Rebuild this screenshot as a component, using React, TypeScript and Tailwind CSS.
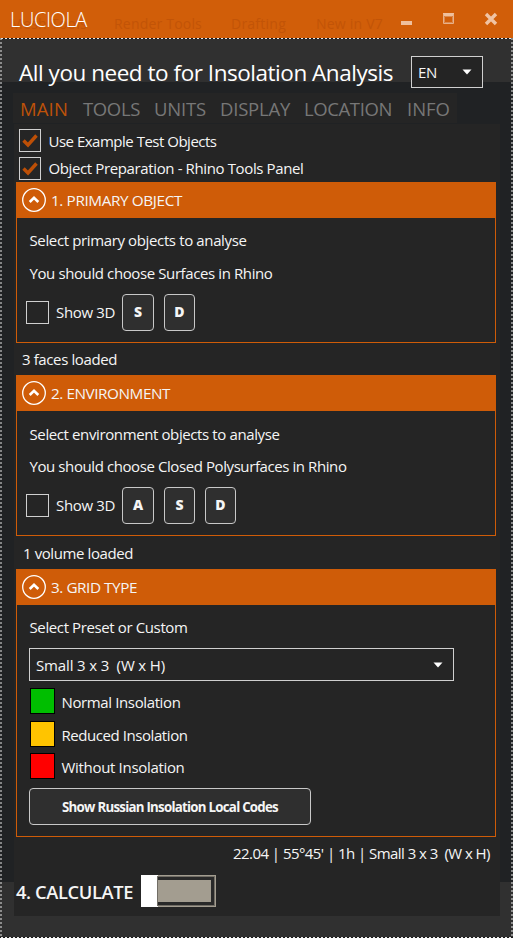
import { useLayoutEffect, useRef, useState, type ReactNode } from 'react';

// A single line of text, tracked so that it spans the given width.
function Line({ w, className = '', children }: { w: number; className?: string; children: string }) {
  const ref = useRef<HTMLSpanElement>(null);
  const [spacing, setSpacing] = useState(0);
  useLayoutEffect(() => {
    if (!ref.current) return;
    const natural = ref.current.getBoundingClientRect().width;
    setSpacing((w - natural) / children.length);
  }, [w, children]);
  return (
    <span ref={ref} className={`block w-max shrink-0 -translate-y-px whitespace-pre ${className}`} style={{ letterSpacing: spacing }}>
      {children}
    </span>
  );
}

function Check({ checked = false, className = '' }: { checked?: boolean; className?: string }) {
  return (
    <span className={`flex h-[23px] shrink-0 items-center justify-center border border-[#d0d0d0] ${className}`}>
      {checked && (
        <svg width="16" height="14" viewBox="0 0 16 14" fill="none" stroke="#bd4f06" strokeWidth="3.4">
          <path d="M1.5 6.5 L6 11 L14.5 1.5" />
        </svg>
      )}
    </span>
  );
}

function Key({ className, children }: { className: string; children: string }) {
  return (
    <button className={`flex h-[37px] shrink-0 items-center justify-center rounded-[4px] border border-[#c8c8c8] bg-[#2f2f2f] pb-[2px] text-[14px] font-extrabold ${className}`}>
      {children}
    </button>
  );
}

function Section({ title, w, className, children }: { title: string; w: number; className: string; children: ReactNode }) {
  return (
    <section className={`ml-[2px] w-[480px] shrink-0 border border-[#cf5c08] ${className}`}>
      <header className="flex h-[35px] items-center bg-[#cf5c08] pl-[5px]">
        <svg className="mb-px" width="24" height="24" viewBox="0 0 24 24" fill="none" stroke="#fff">
          <circle cx="12" cy="12" r="11.3" strokeWidth="1.3" />
          <path d="M7.7 14 L12 9.8 L16.3 14" strokeWidth="2.6" />
        </svg>
        <Line w={w} className="ml-[5px] text-[15.3px]">{title}</Line>
      </header>
      {children}
    </section>
  );
}

function Caret() {
  return (
    <svg width="10" height="6" viewBox="0 0 10 6" fill="#fff">
      <path d="M0.5 0.5 H9.5 L5 5.5 Z" />
    </svg>
  );
}

function Legend({ color, w, label }: { color: string; w: number; label: string }) {
  return (
    <div className="flex h-[26px] items-center">
      <span className={`h-[26px] w-[25px] border border-black ${color}`} />
      <Line w={w} className="ml-[6.5px] pt-[4px]">{label}</Line>
    </div>
  );
}

export default function App() {
  return (
    <div className="flex h-[938px] w-[513px] flex-col overflow-hidden bg-[#303030] font-['Open_Sans','Noto_Sans',sans-serif] text-[15px] leading-[20px] text-[#f5f5f5]">
      <div className="relative flex h-[38px] shrink-0 items-center bg-[#d15e09] pl-[10px]">
        <div className="absolute top-[15px] left-[10px] flex text-[14px] text-[#c25407]">
          <Line w={77}>Mesh Tools</Line>
          <Line w={88} className="ml-[27px]">Render Tools</Line>
          <Line w={55} className="ml-[29px]">Drafting</Line>
          <Line w={67} className="ml-[30px]">New in V7</Line>
        </div>
        <Line w={77} className="relative mt-[4px] text-[20px] font-light text-white">LUCIOLA</Line>
        <svg className="ml-auto" width="114" height="38" viewBox="0 0 114 38" fill="none">
          <path d="M2 23 H13" stroke="#efc09d" strokeWidth="4" />
          <path d="M44 13 H55 V16 H44 Z" fill="#efc09d" />
          <path d="M44.5 14 V23.5 H54.5 V14" stroke="#e8b189" />
          <path d="M45.5 16.5 H53.5 V22.5 H45.5 Z" stroke="#dc8b50" />
          <path d="M87 14 L97 24 M97 14 L87 24" stroke="#f0c3a3" strokeWidth="3.4" />
        </svg>
      </div>

      <div className="relative flex h-[900px] shrink-0 flex-col">
        <div className="flex h-[44px] shrink-0 items-start pl-[19px]">
          <Line w={374} className="relative z-10 mt-[21px] text-[22.5px] leading-[30px] text-white">All you need to for Insolation Analysis</Line>
          <div className="relative z-10 mt-[18px] ml-[18px] flex h-[32px] w-[72px] shrink-0 items-center justify-between border border-[#d0d0d0] bg-[#242424] pr-[10px] pl-[6px]">
            <Line w={19} className="pt-[2px] text-[15px]">EN</Line>
            <Caret />
          </div>
        </div>

        <div className="h-[800px] shrink-0 bg-[#202224] pt-[11px]">
          <nav className="ml-[13px] flex h-[30px] w-[444px] items-center bg-[#252525] pl-[7px] text-[18.5px] leading-[24px] text-[#777]">
            <Line w={48} className="mt-[4px] text-[#bd5209]">MAIN</Line>
            <Line w={57} className="mt-[4px] ml-[15px]">TOOLS</Line>
            <Line w={52} className="mt-[4px] ml-[14px]">UNITS</Line>
            <Line w={70} className="mt-[4px] ml-[14px]">DISPLAY</Line>
            <Line w={88} className="mt-[4px] ml-[14px]">LOCATION</Line>
            <Line w={43} className="mt-[4px] ml-[15px]">INFO</Line>
          </nav>

          <main className="mt-[1px] ml-[14px] flex h-[792px] w-[486px] flex-col bg-[#252525] pt-[5px]">
            <div className="flex h-[28px] shrink-0 items-start pl-[5px]">
              <Check checked className="w-[22px]" />
              <Line w={168} className="mt-[3px] ml-[7.5px]">Use Example Test Objects</Line>
            </div>
            <div className="flex h-[25px] shrink-0 items-start pl-[5px]">
              <Check checked className="w-[22px]" />
              <Line w={255} className="mt-[2px] ml-[7.5px]">Object Preparation - Rhino Tools Panel</Line>
            </div>

            <Section title="1. PRIMARY OBJECT" w={131} className="h-[161px]">
              <div className="pt-[13px] pl-[12.5px]">
                <Line w={217}>Select primary objects to analyse</Line>
                <Line w={243} className="mt-[13px]">You should choose Surfaces in Rhino</Line>
              </div>
              <div className="mt-[10px] flex items-center pl-[9px]">
                <Check className="w-[23px]" />
                <Line w={59} className="ml-[7px]">Show 3D</Line>
                <Key className="ml-[7px] w-[32px]">S</Key>
                <Key className="ml-[10px] w-[31px]">D</Key>
              </div>
            </Section>
            <Line w={95} className="mt-[7px] mb-[5px] ml-[8px]">3 faces loaded</Line>

            <Section title="2. ENVIRONMENT" w={119} className="h-[161px]">
              <div className="pt-[14px] pl-[12.5px]">
                <Line w={250}>Select environment objects to analyse</Line>
                <Line w={317} className="mt-[12px]">You should choose Closed Polysurfaces in Rhino</Line>
              </div>
              <div className="mt-[10px] flex items-center pl-[9px]">
                <Check className="w-[23px]" />
                <Line w={59} className="ml-[7px]">Show 3D</Line>
                <Key className="ml-[7px] w-[32px]">A</Key>
                <Key className="ml-[10px] w-[31px]">S</Key>
                <Key className="ml-[10px] w-[31px]">D</Key>
              </div>
            </Section>
            <Line w={110} className="mt-[8px] mb-[5px] ml-[9px]">1 volume loaded</Line>

            <Section title="3. GRID TYPE" w={86} className="h-[268px]">
              <div className="flex flex-col items-start pt-[13px] pl-[12px]">
                <Line w={158} className="ml-[0.5px]">Select Preset or Custom</Line>
                <div className="mt-[10px] flex h-[33px] w-[425px] items-center justify-between border border-[#d0d0d0] pr-[10px] pl-[6px]">
                  <Line w={129} className="pt-[2px]">{'Small 3 x 3  (W x H)'}</Line>
                  <Caret />
                </div>
                <div className="mt-[7px] ml-px flex flex-col gap-[6.5px]">
                  <Legend color="bg-[#00be00]" w={119} label="Normal Insolation" />
                  <Legend color="bg-[#ffc400]" w={126} label="Reduced Insolation" />
                  <Legend color="bg-[#ff0000]" w={123} label="Without Insolation" />
                </div>
                <button className="mt-[9px] flex h-[37px] w-[282px] items-center justify-center rounded-[4px] border border-[#c8c8c8] bg-[#2f2f2f]">
                  <Line w={216} className="pt-[2px] text-[13.3px] font-bold">Show Russian Insolation Local Codes</Line>
                </button>
              </div>
            </Section>
            <Line w={257} className="mt-[7px] ml-[219px]">{"22.04 | 55°45' | 1h | Small 3 x 3  (W x H)"}</Line>

            <div className="mt-[11px] flex items-center pl-[2px]">
              <Line w={117} className="mt-[4px] text-[18.3px] leading-[24px] font-semibold">4. CALCULATE</Line>
              <div className="ml-[8px] flex h-[32px] w-[75px] bg-[#a39d90]">
                <span className="h-[32px] w-[17px] bg-white" />
                <span className="mt-[2px] h-[28px] w-[56px] border-y-[3px] border-r-[3px] border-[#292929] outline outline-[#716d65]" />
              </div>
            </div>
          </main>
        </div>

        {/* dotted window edge */}
        <svg className="pointer-events-none absolute inset-0 z-20" width="513" height="900" fill="none" stroke="#e8e8e8" strokeDasharray="2 2">
          <path d="M0 0.5 H513 M0 899.5 H513" stroke="#191919" strokeDasharray="none" />
          <path d="M1 0.5 H513 M1 899.5 H513 M1 0 V900 M512 0 V900" />
        </svg>
      </div>
    </div>
  );
}
